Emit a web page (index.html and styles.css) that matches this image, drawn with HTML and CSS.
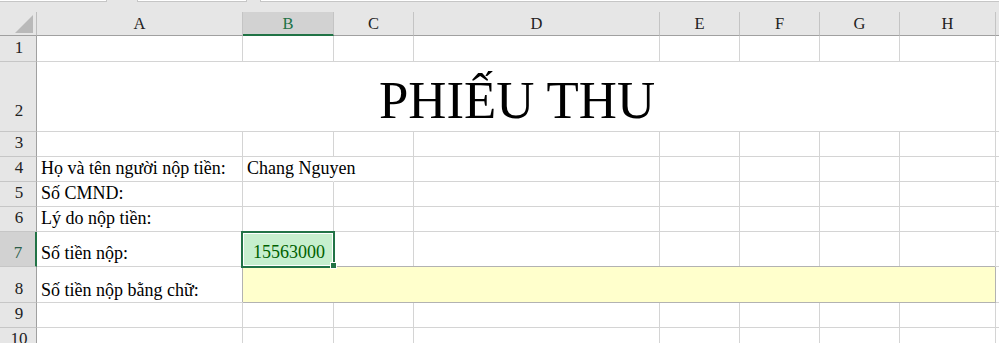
FILE: index.html
```
<!DOCTYPE html>
<html lang="vi">
<head>
<meta charset="utf-8">
<title>PHIẾU THU</title>
<link rel="stylesheet" href="styles.css">
</head>
<body>
<div class="topstrip">
  <div class="tbox tb1"></div>
  <div class="tgap g1"></div>
  <div class="tbox tb2"></div>
  <div class="tgap g2"></div>
  <div class="tbox tb3"></div>
</div>
<div class="sheet">
  <!-- header row -->
  <div class="corner"><svg width="36" height="23" viewBox="0 0 36 23"><polygon points="33,3 33,21 15,21" fill="#b9b9b9"/></svg></div>
  <div class="ch">A</div>
  <div class="ch sel">B</div>
  <div class="ch">C</div>
  <div class="ch">D</div>
  <div class="ch">E</div>
  <div class="ch">F</div>
  <div class="ch">G</div>
  <div class="ch">H</div>
  <div class="ch fill"></div>

  <!-- row 1 -->
  <div class="rh">1</div>
  <div class="c"></div><div class="c"></div><div class="c"></div><div class="c"></div><div class="c"></div><div class="c"></div><div class="c"></div><div class="c"></div><div class="c last"></div>

  <!-- row 2 -->
  <div class="rh rh2">2</div>
  <div class="c title">PHIẾU THU</div>
  <div class="c last"></div>

  <!-- row 3 -->
  <div class="rh">3</div>
  <div class="c"></div><div class="c"></div><div class="c"></div><div class="c"></div><div class="c"></div><div class="c"></div><div class="c"></div><div class="c"></div><div class="c last"></div>

  <!-- row 4 -->
  <div class="rh">4</div>
  <div class="c t">Họ và tên người nộp tiền:</div>
  <div class="c t spill">Chang Nguyen</div>
  <div class="c"></div><div class="c"></div><div class="c"></div><div class="c"></div><div class="c"></div><div class="c"></div><div class="c last"></div>

  <!-- row 5 -->
  <div class="rh">5</div>
  <div class="c t">Số CMND:</div>
  <div class="c"></div><div class="c"></div><div class="c"></div><div class="c"></div><div class="c"></div><div class="c"></div><div class="c"></div><div class="c last"></div>

  <!-- row 6 -->
  <div class="rh">6</div>
  <div class="c t">Lý do nộp tiền:</div>
  <div class="c"></div><div class="c"></div><div class="c"></div><div class="c"></div><div class="c"></div><div class="c"></div><div class="c"></div><div class="c last"></div>

  <!-- row 7 -->
  <div class="rh rhsel">7</div>
  <div class="c t">Số tiền nộp:</div>
  <div class="c t num active">15563000<div class="selbox"></div><div class="handle"></div></div>
  <div class="c"></div><div class="c"></div><div class="c"></div><div class="c"></div><div class="c"></div><div class="c"></div><div class="c last"></div>

  <!-- row 8 -->
  <div class="rh">8</div>
  <div class="c t r8">Số tiền nộp bằng chữ:</div>
  <div class="c note"></div>
  <div class="c last"></div>

  <!-- row 9 -->
  <div class="rh">9</div>
  <div class="c"></div><div class="c"></div><div class="c"></div><div class="c"></div><div class="c"></div><div class="c"></div><div class="c"></div><div class="c"></div><div class="c last"></div>

  <!-- row 10 -->
  <div class="rh">10</div>
  <div class="c"></div><div class="c"></div><div class="c"></div><div class="c"></div><div class="c"></div><div class="c"></div><div class="c"></div><div class="c"></div><div class="c last"></div>
</div>
</body>
</html>
```
FILE: styles.css
```
* { box-sizing: border-box; }
html, body {
  margin: 0;
  padding: 0;
  background: #ffffff;
  overflow: hidden;
  width: 999px;
  height: 343px;
}
body {
  font-family: "Liberation Serif", "Times New Roman", serif;
  color: #000;
}
.topstrip {
  height: 12px;
  background: #e6e6e6;
  display: flex;
  align-items: flex-start;
}
.tbox {
  height: 2px;
  background: #ffffff;
  border: 1px solid #c6c6c6;
  border-top: none;
}
.tb1 { width: 107px; border-left: none; }
.g1 { width: 30px; }
.tb2 { width: 110px; }
.g2 { width: 13px; }
.tb3 { flex: 1; border-right: none; }

.sheet {
  display: grid;
  grid-template-columns: 37px 206px 91px 80px 246px 80px 80px 80px 96px 1fr;
  grid-template-rows: 24px 26px 70px 25px 25px 25px 25px 35px 36px 25px 25px;
}
.corner {
  background: #e6e6e6;
  border-right: 1px solid #bdbdbd;
  border-bottom: 1px solid #a0a0a0;
}
.corner svg { display: block; }
.ch {
  background: #e6e6e6;
  border-right: 1px solid #c4c4c4;
  border-bottom: 1px solid #a0a0a0;
  font-size: 16.5px;
  color: #222;
  display: flex;
  justify-content: center;
  align-items: flex-end;
  line-height: 1;
  padding-bottom: 3px;
}
.ch.sel {
  background: #d2d2d2;
  color: #217346;
  border-bottom: 2px solid #217346;
  padding-bottom: 2px;
}
.ch.fill { border-right: none; }

.rh {
  background: #e6e6e6;
  border-right: 1px solid #a0a0a0;
  border-bottom: 1px solid #c6c6c6;
  font-size: 17px;
  color: #222;
  display: flex;
  justify-content: center;
  align-items: flex-end;
  line-height: 1;
  padding-bottom: 5px;
  padding-left: 2px;
}
.rh2 { padding-bottom: 12px; }
.rhsel {
  background: #d2d2d2;
  color: #2c5e48;
  border-right: 2px solid #217346;
  padding-left: 1px;
}

.c {
  border-right: 1px solid #d4d4d4;
  border-bottom: 1px solid #d4d4d4;
  min-width: 0;
}
.c.last { border-right: none; }
.t {
  display: flex;
  align-items: flex-end;
  padding-left: 4px;
  padding-bottom: 2px;
  font-size: 18px;
  white-space: nowrap;
}
.r8 { padding-bottom: 1px; }
.spill { border-right-color: transparent; overflow: visible; }
.title {
  grid-column: 2 / 10;
  display: flex;
  justify-content: center;
  align-items: flex-end;
  font-size: 52.8px;
  padding-left: 2px;
  padding-bottom: 1px;
  white-space: nowrap;
}
.num {
  position: relative;
  background: #c6efce;
  color: #006100;
  justify-content: center;
  padding-left: 2px;
  padding-bottom: 3px;
}
.selbox {
  position: absolute;
  left: -2px;
  top: -1px;
  right: -2px;
  bottom: -2px;
  border: 2px solid #217346;
  box-shadow: inset 0 0 0 1px #ffffff;
}
.handle {
  position: absolute;
  left: 87px;
  top: 30px;
  width: 7px;
  height: 7px;
  background: #217346;
  border: 1px solid #ffffff;
}
.note {
  grid-column: 3 / 10;
  background: #ffffcc;
  border-right: 1px solid #b2b2b2;
  border-bottom: 1px solid #b2b2b2;
  box-shadow: -1px -1px 0 #b2b2b2;
}
```
